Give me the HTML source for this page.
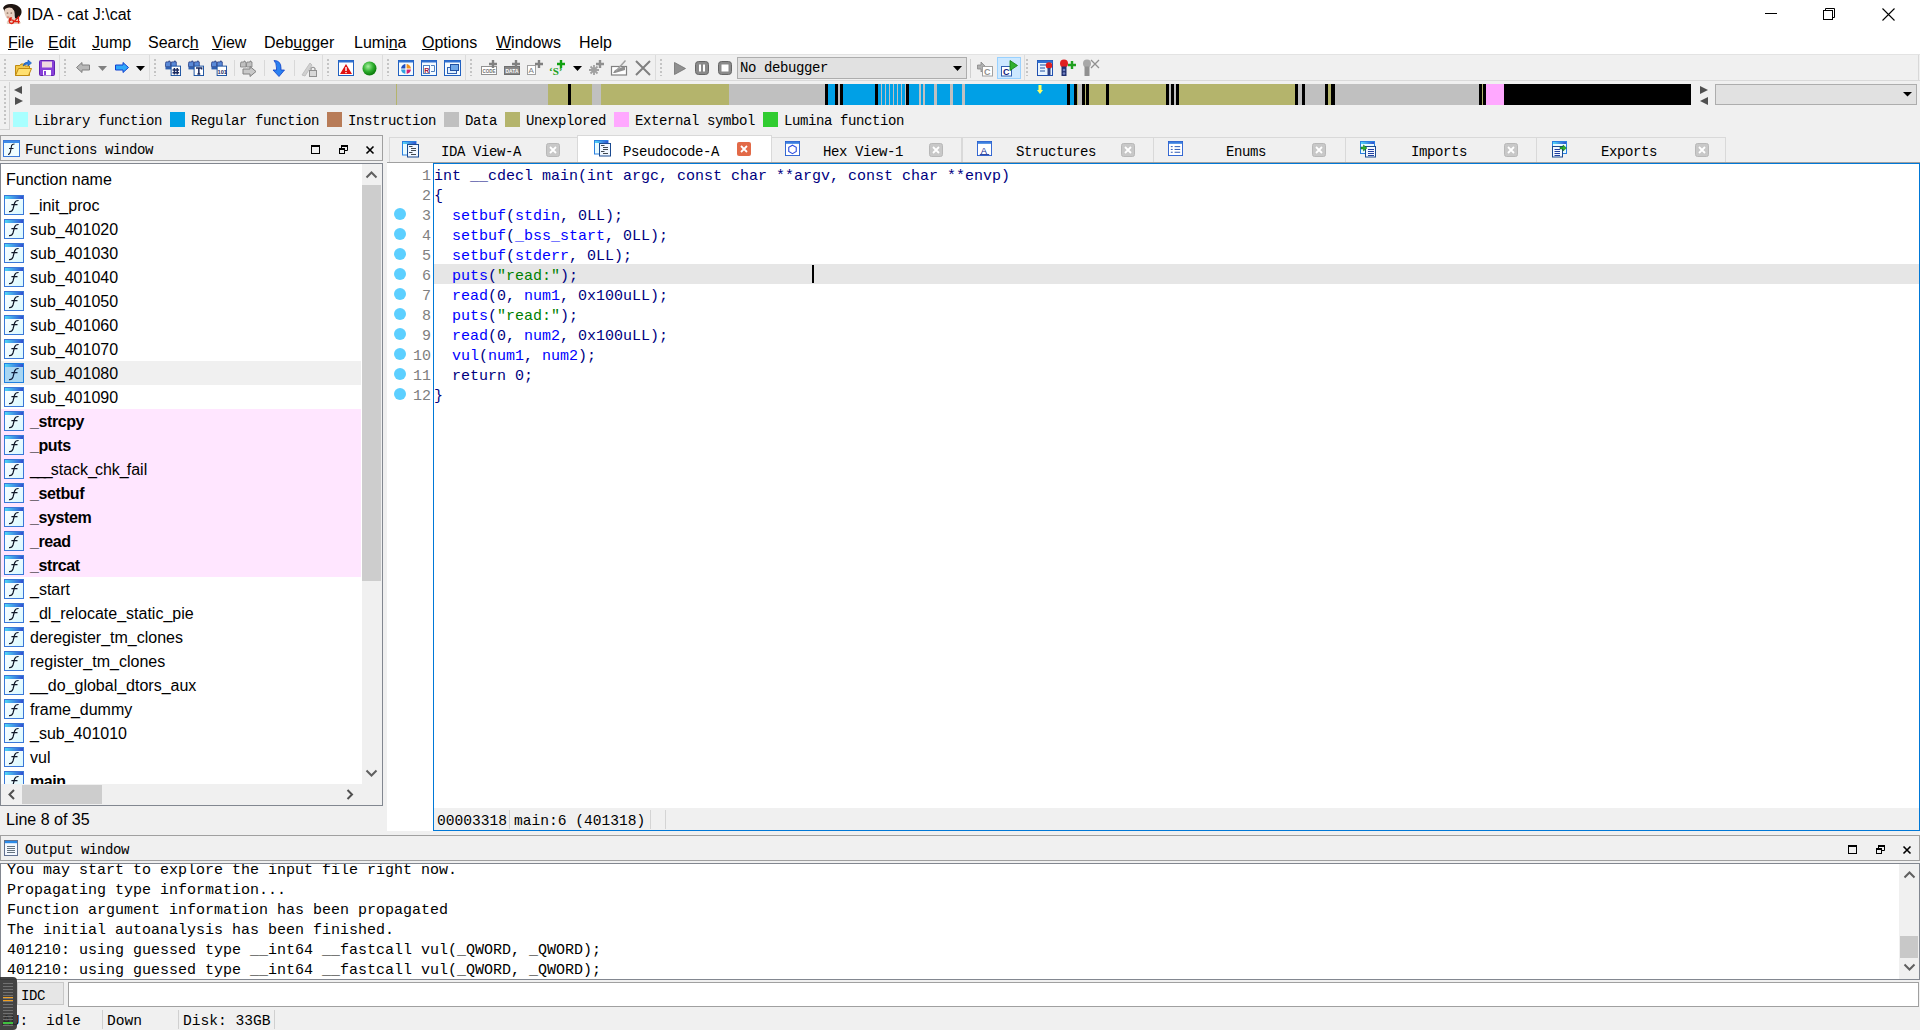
<!DOCTYPE html>
<html><head><meta charset="utf-8">
<style>
*{margin:0;padding:0;box-sizing:border-box}
html,body{width:1920px;height:1030px;overflow:hidden;background:#f0f0f0;font-family:"Liberation Sans",sans-serif;color:#000}
.a{position:absolute}
.ui{font-family:"Liberation Sans",sans-serif;font-size:16px;white-space:pre;line-height:20px}
.sm{position:absolute;font-family:"Liberation Mono",monospace;font-size:14px;letter-spacing:-0.4px;white-space:pre;line-height:16px}
.code{position:absolute;font-family:"Liberation Mono",monospace;font-size:15px;white-space:pre;line-height:20px}
.grip{position:absolute;width:2px;height:17px;background:repeating-linear-gradient(#c4c4c4 0 2px,transparent 2px 4px)}
.sep{position:absolute;width:1px;background:#d4d4d4}
svg{position:absolute;overflow:visible}
b.i{font-weight:normal;color:#0000ff}
</style></head><body>
<!-- ===== title bar ===== -->
<div class="a" style="left:0;top:0;width:1920px;height:54px;background:#fff"></div>
<svg style="left:2px;top:3px" width="20" height="22" viewBox="0 0 20 22">
<path d="M1 5Q3 0.5 10 1Q16 1.5 19 6Q20.5 10 18 13Q16 17 13 16L12 8Q8 5 3 9Z" fill="#1e1410"/>
<path d="M3 6Q6 3.5 10 5Q12.5 7 12.5 11Q12 16 8 17Q5 16.5 3.5 13Q1.5 9 3 6Z" fill="#e6cfbf"/>
<ellipse cx="5.5" cy="10" rx="0.9" ry="0.6" fill="#604030"/><ellipse cx="9.3" cy="10" rx="0.9" ry="0.6" fill="#604030"/>
<ellipse cx="6" cy="14" rx="1.3" ry="0.6" fill="#c06050"/>
<path d="M6 17Q10 16 12 14Q15 17 19 19.5L18 21H5Q4 19 6 17Z" fill="#e4d2c4"/>
<path d="M8.5 14.5Q7 16 7.2 18.5Q7.5 20.5 9.5 20.5Q11.5 20.5 11.5 18.5Q11.5 16.8 9.5 16.8Q8.2 16.8 8 18M9.8 14.5Q8.6 15.5 8 17" fill="none" stroke="#e02010" stroke-width="1.3"/>
<path d="M16.5 20.5V14L12.2 18.6H17.8" fill="none" stroke="#e02010" stroke-width="1.3"/>
</svg>
<div class="a ui" style="left:27px;top:5px">IDA - cat J:\cat</div>
<svg style="left:1765px;top:13px" width="13" height="1"><rect width="12" height="1" fill="#000"/></svg>
<svg style="left:1823px;top:8px" width="13" height="12"><rect x="0.5" y="2.5" width="9" height="9" fill="none" stroke="#000"/><path d="M2.5 2.5V0.5H11.5V9.5H9.5" fill="none" stroke="#000"/></svg>
<svg style="left:1882px;top:8px" width="13" height="13"><path d="M0.5 0.5L12.5 12.5M12.5 0.5L0.5 12.5" stroke="#000" stroke-width="1.1"/></svg>
<!-- ===== menu ===== -->
<div class="a ui" style="left:8px;top:33px"><u>F</u>ile</div>
<div class="a ui" style="left:48px;top:33px"><u>E</u>dit</div>
<div class="a ui" style="left:92px;top:33px"><u>J</u>ump</div>
<div class="a ui" style="left:148px;top:33px">Searc<u>h</u></div>
<div class="a ui" style="left:212px;top:33px"><u>V</u>iew</div>
<div class="a ui" style="left:264px;top:33px">Deb<u>u</u>gger</div>
<div class="a ui" style="left:354px;top:33px">Lumi<u>n</u>a</div>
<div class="a ui" style="left:422px;top:33px"><u>O</u>ptions</div>
<div class="a ui" style="left:496px;top:33px"><u>W</u>indows</div>
<div class="a ui" style="left:579px;top:33px">Help</div>
<!-- ===== toolbar ===== -->
<div class="a" style="left:0;top:54px;width:1920px;height:1px;background:#e3e3e3"></div>
<div class="a" style="left:0;top:80px;width:1920px;height:1px;background:#dadada"></div>

<div class="grip" style="left:4px;top:59px"></div>
<svg style="left:15px;top:60px" width="17" height="17" viewBox="0 0 17 17">
<path d="M0.5 5.5H5L6 4H10V6H14.5V15.5H0.5Z" fill="#f2c84a" stroke="#c08a10"/>
<path d="M0.5 15.5L3.5 8.5H16.5L13.5 15.5Z" fill="#ffe070" stroke="#c08a10"/>
<path d="M8 6Q9 2 13 2V0L16.5 3L13 6V4Q10 4 8 6Z" fill="#2a7ae0" stroke="#1050b0" stroke-width="0.6"/>
</svg>
<svg style="left:39px;top:60px" width="16" height="16" viewBox="0 0 16 16">
<rect x="0.5" y="0.5" width="15" height="15" rx="1" fill="#8840d8" stroke="#6020b0"/>
<rect x="3" y="1.5" width="10" height="6" fill="#f0d8e0"/>
<rect x="4" y="10" width="8" height="5.5" fill="#fff"/>
<rect x="5" y="11" width="2" height="4" fill="#8840d8"/>
</svg>
<div class="sep" style="left:59px;top:55px;height:25px;background:#dcdcdc"></div>
<div class="grip" style="left:64px;top:59px"></div>
<svg style="left:76px;top:62px" width="14" height="11" viewBox="0 0 14 11"><path d="M0.5 5.5L6 0.5V3H13.5V8H6V10.5Z" fill="#b8b8b8" stroke="#808080"/></svg>
<svg style="left:98px;top:66px" width="10" height="6"><path d="M0 0H9L4.5 5Z" fill="#808080"/></svg>
<svg style="left:115px;top:62px" width="14" height="11" viewBox="0 0 14 11"><path d="M13.5 5.5L8 0.5V3H0.5V8H8V10.5Z" fill="#30a8f8" stroke="#1040d0"/></svg>
<svg style="left:136px;top:66px" width="10" height="6"><path d="M0 0H9L4.5 5Z" fill="#000"/></svg>
<div class="sep" style="left:149px;top:55px;height:25px;background:#dcdcdc"></div>
<div class="grip" style="left:154px;top:59px"></div>
<svg style="left:165px;top:60px" width="16" height="16" viewBox="0 0 17 17">
<path d="M1 2H4V1H5V2H6V7H0.5V4Z M7 2H10V1H11V2H12V7H6.5V4Z" fill="#5a8ad8" stroke="#203880" stroke-width="0.8"/>
<rect x="0.5" y="7" width="11" height="3" fill="#3060b0"/>
<rect x="6.5" y="6.5" width="10" height="10" fill="#fff" stroke="#1850a0"/>
<path d="M10 8.5V15.5M13 8.5V15.5M8 10.5H15M8 13.5H15" stroke="#1a2a60" stroke-width="1.6"/>
</svg><svg style="left:188px;top:60px" width="16" height="16" viewBox="0 0 17 17">
<path d="M1 2H4V1H5V2H6V7H0.5V4Z M7 2H10V1H11V2H12V7H6.5V4Z" fill="#5a8ad8" stroke="#203880" stroke-width="0.8"/>
<rect x="0.5" y="7" width="11" height="3" fill="#3060b0"/>
<rect x="6.5" y="6.5" width="10" height="10" fill="#fff" stroke="#1850a0"/>
<path d="M8.5 8.5H14.5V10M11.5 8.5V15M10 15H13" stroke="#1a2a60" stroke-width="1.6" fill="none"/>
</svg><svg style="left:211px;top:60px" width="16" height="16" viewBox="0 0 17 17">
<path d="M1 2H4V1H5V2H6V7H0.5V4Z M7 2H10V1H11V2H12V7H6.5V4Z" fill="#5a8ad8" stroke="#203880" stroke-width="0.8"/>
<rect x="0.5" y="7" width="11" height="3" fill="#3060b0"/>
<rect x="6.5" y="6.5" width="10" height="10" fill="#fff" stroke="#1850a0"/>
<text x="7" y="15" font-family="Liberation Sans" font-size="6" font-weight="bold" fill="#1a2a60">101</text>
</svg>
<div class="sep" style="left:234px;top:60px;height:16px;background:#d8d8d8"></div>
<svg style="left:240px;top:60px" width="17" height="17" viewBox="0 0 17 17">
<path d="M1 2H4V1H5V2H6V7H0.5V4Z M7 2H10V1H11V2H12V7H6.5V4Z" fill="#c0c0c0" stroke="#808080" stroke-width="0.8"/>
<path d="M3 9H10V6.5L16 11.5L10 16.5V14H3Z" fill="#c8c8c8" stroke="#808080"/>
</svg>
<div class="sep" style="left:264px;top:60px;height:16px;background:#d8d8d8"></div>
<svg style="left:272px;top:60px" width="14" height="17" viewBox="0 0 14 17">
<path d="M2 0.5Q9 0.5 9 8V10H12.5L7 16.5L1 10H4.5V8Q4.5 3 2 0.5Z" fill="#2a80f0" stroke="#1040c8" stroke-width="0.8"/>
</svg>
<div class="sep" style="left:294px;top:60px;height:16px;background:#d8d8d8"></div>
<svg style="left:301px;top:60px" width="17" height="17" viewBox="0 0 17 17">
<path d="M1 15L9 3L11 5L4 16Z" fill="#d0d0d0" stroke="#c0c0c0"/>
<rect x="8.5" y="10.5" width="7" height="6" fill="#d8d8d8" stroke="#909090"/>
<path d="M10 10.5V8.5Q12 6 14 8.5V10.5" fill="none" stroke="#909090" stroke-width="1.2"/>
</svg>
<div class="sep" style="left:322px;top:55px;height:25px;background:#dcdcdc"></div>
<div class="grip" style="left:327px;top:59px"></div>
<svg style="left:338px;top:60px" width="16" height="16" viewBox="0 0 16 16">
<rect x="0.5" y="0.5" width="15" height="15" fill="#fff" stroke="#2060c0"/><rect x="0.5" y="0.5" width="15" height="2" fill="#3070d0"/>
<path d="M8 4L14 14H2Z" fill="#e01010"/><rect x="7.3" y="7" width="1.4" height="4" fill="#fff"/><rect x="7.3" y="12" width="1.4" height="1.2" fill="#fff"/>
</svg>
<svg style="left:362px;top:61px" width="15" height="15" viewBox="0 0 15 15">
<defs><radialGradient id="gb" cx="0.4" cy="0.35" r="0.6"><stop offset="0" stop-color="#a8f0a0"/><stop offset="0.6" stop-color="#30b030"/><stop offset="1" stop-color="#108010"/></radialGradient></defs>
<circle cx="7.5" cy="7.5" r="7" fill="url(#gb)"/>
</svg>
<div class="sep" style="left:382px;top:55px;height:25px;background:#dcdcdc"></div>
<div class="grip" style="left:387px;top:59px"></div>
<svg style="left:398px;top:60px" width="16" height="16" viewBox="0 0 16 16">
<rect x="0.5" y="0.5" width="15" height="15" fill="#f4fbff" stroke="#2060c0"/><rect x="0.5" y="0.5" width="15" height="2" fill="#3070d0"/>
<path d="M8 4A5 5 0 0 0 3 9H8Z" fill="#2050c0"/><path d="M8 4A5 5 0 0 1 13 9H8Z" fill="#f09020"/><path d="M3 9A5 5 0 0 0 8 14V9Z" fill="#30a0e0"/><path d="M13 9A5 5 0 0 1 8 14V9Z" fill="#d02070"/>
<path d="M8 4V14M3 9H13" stroke="#fff" stroke-width="1.2"/>
</svg>
<svg style="left:421px;top:60px" width="16" height="16" viewBox="0 0 16 16">
<rect x="0.5" y="0.5" width="15" height="15" fill="#f4fbff" stroke="#2060c0"/><rect x="0.5" y="0.5" width="15" height="2" fill="#3070d0"/>
<rect x="2.5" y="5.5" width="6" height="8" fill="#fff" stroke="#5080c0"/><text x="3.3" y="12.5" font-family="Liberation Sans" font-weight="bold" font-size="7" fill="#a02040">R</text>
<path d="M10 5.5H13.5V11.5H10" fill="none" stroke="#5080c0"/>
</svg>
<svg style="left:444px;top:60px" width="17" height="16" viewBox="0 0 17 16">
<rect x="0.5" y="0.5" width="16" height="15" fill="#f4fbff" stroke="#2060c0"/><rect x="0.5" y="0.5" width="16" height="2" fill="#3070d0"/>
<rect x="3.5" y="7.5" width="9" height="6" fill="#e0f0ff" stroke="#3060b0"/><rect x="6.5" y="4.5" width="8" height="6" fill="#70a8e8" stroke="#2050a0"/>
</svg>
<div class="sep" style="left:465px;top:55px;height:25px;background:#dcdcdc"></div>
<div class="grip" style="left:470px;top:59px"></div>
<svg style="left:481px;top:59px" width="17" height="17" viewBox="0 0 17 17"><rect x="0.5" y="7.5" width="15" height="8" fill="#fff" stroke="#909090"/><text x="1.5" y="14" font-family="Liberation Sans" font-weight="bold" font-size="6" textLength="13" lengthAdjust="spacingAndGlyphs" fill="#707070">CODE</text>
<path d="M12 1V9M8 5H16" stroke="#808080" stroke-width="2.4"/></svg><svg style="left:504px;top:59px" width="17" height="17" viewBox="0 0 17 17"><rect x="0.5" y="7.5" width="15" height="8" fill="#888" stroke="#707070"/><text x="1.5" y="14" font-family="Liberation Sans" font-weight="bold" font-size="6" textLength="13" lengthAdjust="spacingAndGlyphs" fill="#fff">DATA</text>
<path d="M12 1V9M8 5H16" stroke="#808080" stroke-width="2.4"/></svg><svg style="left:527px;top:59px" width="17" height="17" viewBox="0 0 17 17"><rect x="0.5" y="6.5" width="8" height="9" fill="#fff" stroke="#a0a0a0"/><text x="1.5" y="14" font-family="Liberation Sans" font-size="8" fill="#808080">A</text>
<path d="M12 1V9M8 5H16" stroke="#808080" stroke-width="2.4"/></svg><svg style="left:549px;top:59px" width="17" height="17" viewBox="0 0 17 17"><text x="0" y="15.5" font-family="Liberation Serif" font-weight="bold" font-size="11" fill="#20a020">‘S’</text>
<path d="M12 1V9M8 5H16" stroke="#10a010" stroke-width="2.4"/></svg>
<svg style="left:573px;top:66px" width="10" height="6"><path d="M0 0H9L4.5 5Z" fill="#000"/></svg>
<svg style="left:588px;top:59px" width="17" height="17" viewBox="0 0 17 17">
<path d="M6 6V16M1 11H11M2.5 7.5L9.5 14.5M9.5 7.5L2.5 14.5" stroke="#a0a0a0" stroke-width="1.8"/>
<path d="M12 1V9M8 5H16" stroke="#909090" stroke-width="2.4"/></svg>
<svg style="left:611px;top:59px" width="17" height="17" viewBox="0 0 17 17">
<rect x="0.5" y="7.5" width="15" height="8.5" fill="#fff" stroke="#808080" stroke-width="1.2"/>
<path d="M2 14L4 11L14 7V11L4 14Z" fill="#909090"/><path d="M5 12L14.5 1.5" stroke="#a0a0a0" stroke-width="1.5"/>
</svg>
<svg style="left:635px;top:60px" width="16" height="16" viewBox="0 0 16 16"><path d="M1 1L15 15M15 1L1 15" stroke="#808080" stroke-width="2"/></svg>
<div class="sep" style="left:655px;top:55px;height:25px;background:#dcdcdc"></div>
<div class="grip" style="left:660px;top:59px"></div>
<svg style="left:674px;top:62px" width="12" height="13" viewBox="0 0 12 13"><path d="M0.5 0.5V12.5L11.5 6.5Z" fill="#909090" stroke="#707070" stroke-width="0.8"/></svg>
<svg style="left:695px;top:61px" width="14" height="14" viewBox="0 0 14 14"><rect x="0.5" y="0.5" width="13" height="13" rx="3" fill="#8a8a8a" stroke="#666"/><rect x="4" y="3.5" width="2" height="7" fill="#fff"/><rect x="8" y="3.5" width="2" height="7" fill="#fff"/></svg>
<svg style="left:718px;top:61px" width="14" height="14" viewBox="0 0 14 14"><rect x="0.5" y="0.5" width="13" height="13" rx="3" fill="#8a8a8a" stroke="#666"/><rect x="3.5" y="3.5" width="7" height="7" fill="#fff"/></svg>
<div class="a" style="left:737px;top:57px;width:230px;height:22px;background:#e1e1e1;border:1px solid #adadad"></div>
<div class="sm" style="left:740px;top:60px">No debugger</div>
<svg style="left:953px;top:66px" width="10" height="6"><path d="M0 0H9L4.5 5Z" fill="#000"/></svg>
<div class="sep" style="left:970px;top:59px;height:19px;background:#d0d0d0"></div>
<svg style="left:977px;top:60px" width="17" height="17" viewBox="0 0 17 17">
<path d="M0.5 5V9H4V12L9 7L4 2V5Z" fill="#b0b0b0" stroke="#888" stroke-width="0.8"/>
<rect x="5.5" y="6.5" width="10" height="9.5" fill="#fff" stroke="#a0a0a0"/><text x="7" y="15" font-family="Liberation Sans" font-weight="bold" font-size="9" fill="#909090">C</text>
</svg>
<div class="a" style="left:997px;top:57px;width:24px;height:22px;background:#cce8ff;border:1px solid #99d1ff"></div>
<svg style="left:1001px;top:60px" width="17" height="17" viewBox="0 0 17 17">
<rect x="0.5" y="6.5" width="10" height="9.5" fill="#fff" stroke="#3060b0"/><text x="2" y="15" font-family="Liberation Sans" font-weight="bold" font-size="9" fill="#102080">C</text>
<path d="M9 0.5V10.5L16.5 5.5Z" fill="#30b030" stroke="#108010" stroke-width="0.8"/>
</svg>
<div class="sep" style="left:1024px;top:55px;height:25px;background:#dcdcdc"></div>
<div class="grip" style="left:1026px;top:59px"></div>
<svg style="left:1037px;top:60px" width="17" height="17" viewBox="0 0 17 17">
<rect x="0.5" y="0.5" width="15" height="15" fill="#e8f4ff" stroke="#2050b0"/><rect x="0.5" y="0.5" width="15" height="2.5" fill="#3070d0"/>
<path d="M3 5H9M3 8H8M3 11H8" stroke="#2050a0"/><circle cx="12" cy="5.5" r="3.2" fill="#e02020"/><rect x="10.5" y="8" width="3" height="7" fill="#304080"/>
</svg>
<svg style="left:1059px;top:59px" width="18" height="18" viewBox="0 0 18 18">
<circle cx="5" cy="4.5" r="4" fill="#e02020"/><rect x="2.5" y="7.5" width="5" height="9.5" fill="#203070"/><circle cx="5" cy="11" r="1.3" fill="#7080c0"/><circle cx="5" cy="14.5" r="1.3" fill="#7080c0"/>
<path d="M13 2V10M9 6H17" stroke="#20a020" stroke-width="2.4"/>
</svg>
<svg style="left:1082px;top:59px" width="18" height="18" viewBox="0 0 18 18">
<circle cx="5" cy="4.5" r="4" fill="#a8a8a8"/><rect x="2.5" y="7.5" width="5" height="9.5" fill="#909090"/>
<path d="M9 1L17 9M17 1L9 9" stroke="#909090" stroke-width="1.3"/>
</svg>


<div class="a" style="left:1918px;top:55px;width:1px;height:25px;background:#d8d8d8"></div>
<!-- ===== nav band ===== -->
<div class="a" style="left:9px;top:82px;width:1px;height:48px;background:#d4d4d4"></div>
<div class="a" style="left:0;top:129px;width:10px;height:1px;background:#d4d4d4"></div>
<div class="grip" style="left:4px;top:86px;height:40px"></div>
<svg style="left:14px;top:86px" width="9" height="20"><path d="M8 0V8L0 4Z" fill="#505050"/><path d="M1 11V19L9 15Z" fill="#505050"/></svg>
<div class="a" style="left:30px;top:84px;width:1661px;height:21px;background:#c0c0c0"></div>
<div class="a" style="left:396px;top:84px;width:1px;height:21px;background:#b4b46c"></div>
<div class="a" style="left:548px;top:84px;width:20px;height:21px;background:#b4b46c"></div>
<div class="a" style="left:568px;top:84px;width:3px;height:21px;background:#000000"></div>
<div class="a" style="left:571px;top:84px;width:21px;height:21px;background:#b4b46c"></div>
<div class="a" style="left:601px;top:84px;width:128px;height:21px;background:#b4b46c"></div>
<div class="a" style="left:825px;top:84px;width:3px;height:21px;background:#000000"></div>
<div class="a" style="left:828px;top:84px;width:7px;height:21px;background:#00a0e6"></div>
<div class="a" style="left:835px;top:84px;width:3px;height:21px;background:#000000"></div>
<div class="a" style="left:840px;top:84px;width:3px;height:21px;background:#000000"></div>
<div class="a" style="left:843px;top:84px;width:32px;height:21px;background:#00a0e6"></div>
<div class="a" style="left:875px;top:84px;width:3px;height:21px;background:#000000"></div>
<div class="a" style="left:878px;top:84px;width:28px;height:21px;background:#00a0e6"></div>
<div class="a" style="left:906px;top:84px;width:3px;height:21px;background:#000000"></div>
<div class="a" style="left:909px;top:84px;width:10px;height:21px;background:#00a0e6"></div>
<div class="a" style="left:921px;top:84px;width:2px;height:21px;background:#00a0e6"></div>
<div class="a" style="left:925px;top:84px;width:9px;height:21px;background:#00a0e6"></div>
<div class="a" style="left:937px;top:84px;width:13px;height:21px;background:#00a0e6"></div>
<div class="a" style="left:953px;top:84px;width:9px;height:21px;background:#00a0e6"></div>
<div class="a" style="left:965px;top:84px;width:102px;height:21px;background:#00a0e6"></div>
<div class="a" style="left:1067px;top:84px;width:3px;height:21px;background:#000000"></div>
<div class="a" style="left:1070px;top:84px;width:4px;height:21px;background:#00a0e6"></div>
<div class="a" style="left:1074px;top:84px;width:3px;height:21px;background:#000000"></div>
<div class="a" style="left:1077px;top:84px;width:1px;height:21px;background:#b4b46c"></div>
<div class="a" style="left:1082px;top:84px;width:3px;height:21px;background:#000000"></div>
<div class="a" style="left:1085px;top:84px;width:1px;height:21px;background:#b4b46c"></div>
<div class="a" style="left:1086px;top:84px;width:3px;height:21px;background:#000000"></div>
<div class="a" style="left:1089px;top:84px;width:17px;height:21px;background:#b4b46c"></div>
<div class="a" style="left:1106px;top:84px;width:3px;height:21px;background:#000000"></div>
<div class="a" style="left:1109px;top:84px;width:57px;height:21px;background:#b4b46c"></div>
<div class="a" style="left:1166px;top:84px;width:3px;height:21px;background:#000000"></div>
<div class="a" style="left:1171px;top:84px;width:3px;height:21px;background:#000000"></div>
<div class="a" style="left:1176px;top:84px;width:3px;height:21px;background:#000000"></div>
<div class="a" style="left:1179px;top:84px;width:116px;height:21px;background:#b4b46c"></div>
<div class="a" style="left:1295px;top:84px;width:3px;height:21px;background:#000000"></div>
<div class="a" style="left:1302px;top:84px;width:3px;height:21px;background:#000000"></div>
<div class="a" style="left:1325px;top:84px;width:3px;height:21px;background:#000000"></div>
<div class="a" style="left:1328px;top:84px;width:3px;height:21px;background:#b4b46c"></div>
<div class="a" style="left:1331px;top:84px;width:4px;height:21px;background:#000000"></div>
<div class="a" style="left:1479px;top:84px;width:3px;height:21px;background:#000000"></div>
<div class="a" style="left:1482px;top:84px;width:1px;height:21px;background:#b4b46c"></div>
<div class="a" style="left:1483px;top:84px;width:3px;height:21px;background:#000000"></div>
<div class="a" style="left:1486px;top:84px;width:18px;height:21px;background:#ffa8ff"></div>
<div class="a" style="left:1504px;top:84px;width:187px;height:21px;background:#000000"></div>
<div class="a" style="left:881px;top:84px;width:1px;height:21px;background:#c0c0c0"></div>
<div class="a" style="left:885px;top:84px;width:1px;height:21px;background:#c0c0c0"></div>
<div class="a" style="left:889px;top:84px;width:1px;height:21px;background:#c0c0c0"></div>
<div class="a" style="left:893px;top:84px;width:1px;height:21px;background:#c0c0c0"></div>
<div class="a" style="left:897px;top:84px;width:1px;height:21px;background:#c0c0c0"></div>
<div class="a" style="left:901px;top:84px;width:1px;height:21px;background:#c0c0c0"></div>
<div class="a" style="left:905px;top:84px;width:1px;height:21px;background:#c0c0c0"></div>
<svg style="left:1037px;top:85px" width="6" height="9"><path d="M1.5 0H4.5V5H6L3 9L0 5H1.5Z" fill="#ffff60"/></svg>

<svg style="left:1700px;top:86px" width="9" height="20"><path d="M0 0V8L8 4Z" fill="#505050"/><path d="M8 11V19L0 15Z" fill="#505050"/></svg>
<div class="a" style="left:1715px;top:84px;width:202px;height:21px;background:#e1e1e1;border:1px solid #adadad"></div>
<svg style="left:1903px;top:92px" width="9" height="5"><path d="M0 0H9L4.5 4.5Z" fill="#000"/></svg>
<div class="a" style="left:13px;top:112px;width:15px;height:15px;background:#a8ffff"></div><div class="sm" style="left:34px;top:113px">Library function</div>
<div class="a" style="left:170px;top:112px;width:15px;height:15px;background:#00a0e6"></div><div class="sm" style="left:191px;top:113px">Regular function</div>
<div class="a" style="left:327px;top:112px;width:15px;height:15px;background:#b87c58"></div><div class="sm" style="left:348px;top:113px">Instruction</div>
<div class="a" style="left:444px;top:112px;width:15px;height:15px;background:#c0c0c0"></div><div class="sm" style="left:465px;top:113px">Data</div>
<div class="a" style="left:505px;top:112px;width:15px;height:15px;background:#b4b46c"></div><div class="sm" style="left:526px;top:113px">Unexplored</div>
<div class="a" style="left:614px;top:112px;width:15px;height:15px;background:#ffa8ff"></div><div class="sm" style="left:635px;top:113px">External symbol</div>
<div class="a" style="left:763px;top:112px;width:15px;height:15px;background:#30cc30"></div><div class="sm" style="left:784px;top:113px">Lumina function</div>


<!-- ===== functions window ===== -->
<div class="a" style="left:0;top:135px;width:383px;height:26px;border:1px solid #a0a0a0;background:#f0f0f0"></div>
<div class="a" style="left:0;top:163px;width:383px;height:643px;border:1px solid #828790;background:#fff;overflow:hidden"></div>
<svg width="0" height="0" style="position:absolute"><defs>
<linearGradient id="fbar" x1="0" x2="1"><stop offset="0" stop-color="#50d8f8"/><stop offset="1" stop-color="#3050d0"/></linearGradient>
<linearGradient id="fbg" x1="0" y1="0" x2="1" y2="1"><stop offset="0" stop-color="#ffffff"/><stop offset="1" stop-color="#d8f8ff"/></linearGradient>
<g id="ficon"><rect x="0.5" y="0.5" width="19" height="19" fill="url(#fbg)" stroke="#3a78d8"/><rect x="1" y="1" width="18" height="3" fill="url(#fbar)"/>
<path d="M5 16.6Q8 17 9 14L10.6 8Q11.4 5.4 14.6 5.5M7.4 9.6H13.5" fill="none" stroke="#101828" stroke-width="1.2"/></g>
<g id="ficon2"><rect x="0.5" y="0.5" width="19" height="19" fill="#a8d6f2" stroke="#2080e0"/><rect x="1" y="1" width="18" height="3" fill="url(#fbar)"/><path d="M5 16.6Q8 17 9 14L10.6 8Q11.4 5.4 14.6 5.5M7.4 9.6H13.5" fill="none" stroke="#102040" stroke-width="1.2"/></g>
</defs></svg>
<svg style="left:3px;top:140px" width="17" height="17" viewBox="0 0 17 17">
<rect x="0.5" y="0.5" width="16" height="16" fill="#eefcff" stroke="#3a78d8"/><rect x="1" y="1" width="15" height="2" fill="#3c8ce8"/>
<path d="M5 14.5Q7 14.5 7.6 11L8.6 5.5Q9 4 11.5 4M6 8.5H10.5" fill="none" stroke="#101828" stroke-width="1.1"/>
</svg>
<div class="sm" style="left:25px;top:142px">Functions window</div>
<svg style="left:311px;top:145px" width="9" height="9"><rect x="0.5" y="0.5" width="8" height="8" fill="none" stroke="#000"/><rect x="0" y="0" width="9" height="2" fill="#000"/></svg>
<svg style="left:339px;top:145px" width="9" height="9"><rect x="0.5" y="3.5" width="5" height="5" fill="none" stroke="#000"/><rect x="0" y="3" width="6" height="2" fill="#000"/><path d="M2.5 3V0.5H8.5V5.5H6" fill="none" stroke="#000"/><rect x="2" y="0" width="7" height="2" fill="#000"/></svg>
<svg style="left:366px;top:146px" width="8" height="8"><path d="M0.5 0.5L7.5 7.5M7.5 0.5L0.5 7.5" stroke="#000" stroke-width="1.6"/></svg>
<div class="a ui" style="left:6px;top:170px">Function name</div>
<div class="a" style="left:1px;top:164px;width:361px;height:620px;overflow:hidden">
<div class="a" style="left:0;top:29px;width:360px;height:24px;"></div><svg style="left:3px;top:31px" width="20" height="20" viewBox="0 0 20 20"><use href="#ficon"/></svg><div class="a ui" style="left:29px;top:32px;">_init_proc</div>
<div class="a" style="left:0;top:53px;width:360px;height:24px;"></div><svg style="left:3px;top:55px" width="20" height="20" viewBox="0 0 20 20"><use href="#ficon"/></svg><div class="a ui" style="left:29px;top:56px;">sub_401020</div>
<div class="a" style="left:0;top:77px;width:360px;height:24px;"></div><svg style="left:3px;top:79px" width="20" height="20" viewBox="0 0 20 20"><use href="#ficon"/></svg><div class="a ui" style="left:29px;top:80px;">sub_401030</div>
<div class="a" style="left:0;top:101px;width:360px;height:24px;"></div><svg style="left:3px;top:103px" width="20" height="20" viewBox="0 0 20 20"><use href="#ficon"/></svg><div class="a ui" style="left:29px;top:104px;">sub_401040</div>
<div class="a" style="left:0;top:125px;width:360px;height:24px;"></div><svg style="left:3px;top:127px" width="20" height="20" viewBox="0 0 20 20"><use href="#ficon"/></svg><div class="a ui" style="left:29px;top:128px;">sub_401050</div>
<div class="a" style="left:0;top:149px;width:360px;height:24px;"></div><svg style="left:3px;top:151px" width="20" height="20" viewBox="0 0 20 20"><use href="#ficon"/></svg><div class="a ui" style="left:29px;top:152px;">sub_401060</div>
<div class="a" style="left:0;top:173px;width:360px;height:24px;"></div><svg style="left:3px;top:175px" width="20" height="20" viewBox="0 0 20 20"><use href="#ficon"/></svg><div class="a ui" style="left:29px;top:176px;">sub_401070</div>
<div class="a" style="left:0;top:197px;width:360px;height:24px;background:#f0f0f0;"></div><svg style="left:3px;top:199px" width="20" height="20" viewBox="0 0 20 20"><use href="#ficon2"/></svg><div class="a ui" style="left:29px;top:200px;">sub_401080</div>
<div class="a" style="left:0;top:221px;width:360px;height:24px;"></div><svg style="left:3px;top:223px" width="20" height="20" viewBox="0 0 20 20"><use href="#ficon"/></svg><div class="a ui" style="left:29px;top:224px;">sub_401090</div>
<div class="a" style="left:0;top:245px;width:360px;height:24px;background:#ffe6ff;"></div><svg style="left:3px;top:247px" width="20" height="20" viewBox="0 0 20 20"><use href="#ficon"/></svg><div class="a ui" style="left:29px;top:248px;font-weight:bold;letter-spacing:-0.4px;">_strcpy</div>
<div class="a" style="left:0;top:269px;width:360px;height:24px;background:#ffe6ff;"></div><svg style="left:3px;top:271px" width="20" height="20" viewBox="0 0 20 20"><use href="#ficon"/></svg><div class="a ui" style="left:29px;top:272px;font-weight:bold;letter-spacing:-0.4px;">_puts</div>
<div class="a" style="left:0;top:293px;width:360px;height:24px;background:#ffe6ff;"></div><svg style="left:3px;top:295px" width="20" height="20" viewBox="0 0 20 20"><use href="#ficon"/></svg><div class="a ui" style="left:29px;top:296px;"><span style="letter-spacing:-2px">___</span>stack<span style="letter-spacing:-2px">_</span>chk<span style="letter-spacing:-2px">_</span>fail</div>
<div class="a" style="left:0;top:317px;width:360px;height:24px;background:#ffe6ff;"></div><svg style="left:3px;top:319px" width="20" height="20" viewBox="0 0 20 20"><use href="#ficon"/></svg><div class="a ui" style="left:29px;top:320px;font-weight:bold;letter-spacing:-0.4px;">_setbuf</div>
<div class="a" style="left:0;top:341px;width:360px;height:24px;background:#ffe6ff;"></div><svg style="left:3px;top:343px" width="20" height="20" viewBox="0 0 20 20"><use href="#ficon"/></svg><div class="a ui" style="left:29px;top:344px;font-weight:bold;letter-spacing:-0.4px;">_system</div>
<div class="a" style="left:0;top:365px;width:360px;height:24px;background:#ffe6ff;"></div><svg style="left:3px;top:367px" width="20" height="20" viewBox="0 0 20 20"><use href="#ficon"/></svg><div class="a ui" style="left:29px;top:368px;font-weight:bold;letter-spacing:-0.4px;">_read</div>
<div class="a" style="left:0;top:389px;width:360px;height:24px;background:#ffe6ff;"></div><svg style="left:3px;top:391px" width="20" height="20" viewBox="0 0 20 20"><use href="#ficon"/></svg><div class="a ui" style="left:29px;top:392px;font-weight:bold;letter-spacing:-0.4px;">_strcat</div>
<div class="a" style="left:0;top:413px;width:360px;height:24px;"></div><svg style="left:3px;top:415px" width="20" height="20" viewBox="0 0 20 20"><use href="#ficon"/></svg><div class="a ui" style="left:29px;top:416px;">_start</div>
<div class="a" style="left:0;top:437px;width:360px;height:24px;"></div><svg style="left:3px;top:439px" width="20" height="20" viewBox="0 0 20 20"><use href="#ficon"/></svg><div class="a ui" style="left:29px;top:440px;">_dl_relocate_static_pie</div>
<div class="a" style="left:0;top:461px;width:360px;height:24px;"></div><svg style="left:3px;top:463px" width="20" height="20" viewBox="0 0 20 20"><use href="#ficon"/></svg><div class="a ui" style="left:29px;top:464px;">deregister_tm_clones</div>
<div class="a" style="left:0;top:485px;width:360px;height:24px;"></div><svg style="left:3px;top:487px" width="20" height="20" viewBox="0 0 20 20"><use href="#ficon"/></svg><div class="a ui" style="left:29px;top:488px;">register_tm_clones</div>
<div class="a" style="left:0;top:509px;width:360px;height:24px;"></div><svg style="left:3px;top:511px" width="20" height="20" viewBox="0 0 20 20"><use href="#ficon"/></svg><div class="a ui" style="left:29px;top:512px;">__do_global_dtors_aux</div>
<div class="a" style="left:0;top:533px;width:360px;height:24px;"></div><svg style="left:3px;top:535px" width="20" height="20" viewBox="0 0 20 20"><use href="#ficon"/></svg><div class="a ui" style="left:29px;top:536px;">frame_dummy</div>
<div class="a" style="left:0;top:557px;width:360px;height:24px;"></div><svg style="left:3px;top:559px" width="20" height="20" viewBox="0 0 20 20"><use href="#ficon"/></svg><div class="a ui" style="left:29px;top:560px;">_sub_401010</div>
<div class="a" style="left:0;top:581px;width:360px;height:24px;"></div><svg style="left:3px;top:583px" width="20" height="20" viewBox="0 0 20 20"><use href="#ficon"/></svg><div class="a ui" style="left:29px;top:584px;">vul</div>
<div class="a" style="left:0;top:605px;width:360px;height:24px;"></div><svg style="left:3px;top:607px" width="20" height="20" viewBox="0 0 20 20"><use href="#ficon"/></svg><div class="a ui" style="left:29px;top:608px;font-weight:bold;letter-spacing:-0.4px;">main</div>
</div>
<div class="a" style="left:362px;top:164px;width:20px;height:620px;background:#f0f0f0"></div>
<div class="a" style="left:362px;top:185px;width:19px;height:396px;background:#cdcdcd"></div>
<svg style="left:365px;top:170px" width="13" height="9"><path d="M1.5 7.5L6.5 2.5L11.5 7.5" fill="none" stroke="#606060" stroke-width="2"/></svg>
<svg style="left:365px;top:769px" width="13" height="9"><path d="M1.5 1.5L6.5 6.5L11.5 1.5" fill="none" stroke="#606060" stroke-width="2"/></svg>
<div class="a" style="left:1px;top:784px;width:381px;height:21px;background:#f0f0f0"></div>
<div class="a" style="left:22px;top:785px;width:80px;height:19px;background:#cdcdcd"></div>
<svg style="left:7px;top:789px" width="9" height="11"><path d="M7 1L2.5 5.5L7 10" fill="none" stroke="#505050" stroke-width="2"/></svg>
<svg style="left:346px;top:789px" width="9" height="11"><path d="M1.5 1L6 5.5L1.5 10" fill="none" stroke="#505050" stroke-width="2"/></svg>
<div class="a ui" style="left:6px;top:810px">Line 8 of 35</div>


<!-- ===== code view ===== -->
<div class="a" style="left:389px;top:137px;width:189px;height:26px;background:#f0f0f0;border:1px solid #d9d9d9;border-bottom:none"></div>
<svg style="left:402px;top:141px" width="17" height="17" viewBox="0 0 17 17"><rect x="0.5" y="0.5" width="13.5" height="13.5" fill="#e8fbff" stroke="#2a80e0"/><rect x="1" y="1" width="13" height="2" fill="url(#fbar)"/><rect x="5.5" y="3.5" width="11" height="12.5" fill="#f0f6ff" stroke="#1a4a90"/><path d="M7 5.5H10.5M9 7.5H14M9 9.5H14M7 11.5H10.5M9 13.5H14" stroke="#404850" stroke-width="1"/></svg>
<div class="sm" style="left:441px;top:144px">IDA View-A</div>
<svg style="left:546px;top:143px" width="14" height="14"><rect x="0.5" y="0.5" width="13" height="13" rx="2" fill="#c8c8c8" stroke="#b8b8b8"/><path d="M4 4L10 10M10 4L4 10" stroke="#fff" stroke-width="1.8"/></svg>
<div class="a" style="left:577px;top:135px;width:195px;height:28px;background:#fff;border:1px solid #d9d9d9;border-bottom:none"></div>
<svg style="left:594px;top:140px" width="17" height="17" viewBox="0 0 17 17"><rect x="0.5" y="0.5" width="13.5" height="13.5" fill="#e8fbff" stroke="#2a80e0"/><rect x="1" y="1" width="13" height="2" fill="url(#fbar)"/><rect x="5.5" y="3.5" width="11" height="12.5" fill="#f0f6ff" stroke="#1a4a90"/><path d="M7 5.5H10.5M9 7.5H14M9 9.5H14M7 11.5H10.5M9 13.5H14" stroke="#404850" stroke-width="1"/></svg>
<div class="sm" style="left:623px;top:144px">Pseudocode-A</div>
<svg style="left:737px;top:142px" width="14" height="14"><rect x="0" y="0" width="14" height="14" rx="2" fill="#e26a48"/><path d="M4 4L10 10M10 4L4 10" stroke="#fff" stroke-width="1.8"/></svg>
<div class="a" style="left:771px;top:137px;width:191px;height:26px;background:#f0f0f0;border:1px solid #d9d9d9;border-bottom:none"></div>
<svg style="left:785px;top:141px" width="15" height="15" viewBox="0 0 16 16"><rect x="0.5" y="0.5" width="15" height="15" fill="#fff" stroke="#2a60d0"/><rect x="1" y="1" width="14" height="2" fill="#3a80e0"/><path d="M8 4.5L12 6.8V11.2L8 13.5L4 11.2V6.8Z" fill="none" stroke="#3050e0" stroke-width="1.2"/></svg>
<div class="sm" style="left:823px;top:144px">Hex View-1</div>
<svg style="left:929px;top:143px" width="14" height="14"><rect x="0.5" y="0.5" width="13" height="13" rx="2" fill="#c8c8c8" stroke="#b8b8b8"/><path d="M4 4L10 10M10 4L4 10" stroke="#fff" stroke-width="1.8"/></svg>
<div class="a" style="left:962px;top:137px;width:192px;height:26px;background:#f0f0f0;border:1px solid #d9d9d9;border-bottom:none"></div>
<svg style="left:977px;top:141px" width="15" height="15" viewBox="0 0 16 16"><rect x="0.5" y="0.5" width="15" height="15" fill="#fff" stroke="#2a60d0"/><rect x="1" y="1" width="14" height="2" fill="#3a80e0"/><text x="4" y="13.5" font-family="Liberation Sans" font-size="10" fill="#102a90">A</text><path d="M3 14.5H13" stroke="#102a90"/></svg>
<div class="sm" style="left:1016px;top:144px">Structures</div>
<svg style="left:1121px;top:143px" width="14" height="14"><rect x="0.5" y="0.5" width="13" height="13" rx="2" fill="#c8c8c8" stroke="#b8b8b8"/><path d="M4 4L10 10M10 4L4 10" stroke="#fff" stroke-width="1.8"/></svg>
<div class="a" style="left:1153px;top:137px;width:193px;height:26px;background:#f0f0f0;border:1px solid #d9d9d9;border-bottom:none"></div>
<svg style="left:1168px;top:141px" width="15" height="15" viewBox="0 0 16 16"><rect x="0.5" y="0.5" width="15" height="15" fill="#fff" stroke="#2a60d0"/><rect x="1" y="1" width="14" height="2" fill="#3a80e0"/><path d="M3 6H5M3 9H5M3 12H5M7 6H13M7 9H13M7 12H13" stroke="#2050b0"/></svg>
<div class="sm" style="left:1226px;top:144px">Enums</div>
<svg style="left:1312px;top:143px" width="14" height="14"><rect x="0.5" y="0.5" width="13" height="13" rx="2" fill="#c8c8c8" stroke="#b8b8b8"/><path d="M4 4L10 10M10 4L4 10" stroke="#fff" stroke-width="1.8"/></svg>
<div class="a" style="left:1345px;top:137px;width:192px;height:26px;background:#f0f0f0;border:1px solid #d9d9d9;border-bottom:none"></div>
<svg style="left:1360px;top:141px" width="17" height="17" viewBox="0 0 17 17"><rect x="0.5" y="0.5" width="14" height="12" fill="#e8fbff" stroke="#2a80e0"/><rect x="1" y="1" width="13" height="2" fill="url(#fbar)"/><rect x="5.5" y="5.5" width="10" height="10.5" fill="#f4f8ff" stroke="#1a4a90"/><path d="M8 8.5H14M8 10.5H14M8 12.5H14M8 14.5H14" stroke="#2040a0"/><path d="M1 6H3.5V4L7 7L3.5 10V8H1Z" fill="#30b030" stroke="#106010" stroke-width="0.5"/></svg>
<div class="sm" style="left:1411px;top:144px">Imports</div>
<svg style="left:1504px;top:143px" width="14" height="14"><rect x="0.5" y="0.5" width="13" height="13" rx="2" fill="#c8c8c8" stroke="#b8b8b8"/><path d="M4 4L10 10M10 4L4 10" stroke="#fff" stroke-width="1.8"/></svg>
<div class="a" style="left:1536px;top:137px;width:190px;height:26px;background:#f0f0f0;border:1px solid #d9d9d9;border-bottom:none"></div>
<svg style="left:1552px;top:141px" width="17" height="17" viewBox="0 0 17 17"><rect x="0.5" y="0.5" width="14" height="12" fill="#e8fbff" stroke="#2a80e0"/><rect x="1" y="1" width="13" height="2" fill="url(#fbar)"/><rect x="0.5" y="5.5" width="10" height="10.5" fill="#f4f8ff" stroke="#1a4a90"/><path d="M2.5 8.5H8M2.5 10.5H8M2.5 12.5H8M2.5 14.5H8" stroke="#2040a0"/><path d="M8 6H11V4L14.5 7L11 10V8H8Z" fill="#30b030" stroke="#106010" stroke-width="0.5"/></svg>
<div class="sm" style="left:1601px;top:144px">Exports</div>
<svg style="left:1695px;top:143px" width="14" height="14"><rect x="0.5" y="0.5" width="13" height="13" rx="2" fill="#c8c8c8" stroke="#b8b8b8"/><path d="M4 4L10 10M10 4L4 10" stroke="#fff" stroke-width="1.8"/></svg>

<div class="a" style="left:387px;top:162px;width:1533px;height:1px;background:#a0a0a0"></div>
<div class="a" style="left:387px;top:163px;width:46px;height:668px;background:#fff"></div>
<div class="a" style="left:433px;top:163px;width:1487px;height:668px;border:1px solid #0078d7;background:#fff"></div>
<div class="a" style="left:434px;top:264px;width:1485px;height:20px;background:#e6e6e6"></div>
<div class="a" style="left:812px;top:265px;width:2px;height:18px;background:#000"></div>
<div class="code" style="left:434px;top:167px;color:#000080"><span style="color:#000080">int __cdecl main(int argc, const char **argv, const char **envp)</span></div>
<div class="code" style="left:404px;top:167px;width:27px;text-align:right;color:#808080">1</div>
<div class="code" style="left:434px;top:187px;color:#000080"><span style="color:#000080">{</span></div>
<div class="code" style="left:404px;top:187px;width:27px;text-align:right;color:#808080">2</div>
<div class="code" style="left:434px;top:207px;color:#000080">  <b class="i">setbuf</b>(<b class="i">stdin</b>, 0LL);</div>
<div class="code" style="left:404px;top:207px;width:27px;text-align:right;color:#808080">3</div>
<div class="a" style="left:394px;top:208px;width:12px;height:12px;border-radius:50%;background:#5ccfff"></div>
<div class="code" style="left:434px;top:227px;color:#000080">  <b class="i">setbuf</b>(<b class="i">_bss_start</b>, 0LL);</div>
<div class="code" style="left:404px;top:227px;width:27px;text-align:right;color:#808080">4</div>
<div class="a" style="left:394px;top:228px;width:12px;height:12px;border-radius:50%;background:#5ccfff"></div>
<div class="code" style="left:434px;top:247px;color:#000080">  <b class="i">setbuf</b>(<b class="i">stderr</b>, 0LL);</div>
<div class="code" style="left:404px;top:247px;width:27px;text-align:right;color:#808080">5</div>
<div class="a" style="left:394px;top:248px;width:12px;height:12px;border-radius:50%;background:#5ccfff"></div>
<div class="code" style="left:434px;top:267px;color:#000080">  <b class="i">puts</b>(<span style="color:#008000">"read:"</span>);</div>
<div class="code" style="left:404px;top:267px;width:27px;text-align:right;color:#808080">6</div>
<div class="a" style="left:394px;top:268px;width:12px;height:12px;border-radius:50%;background:#5ccfff"></div>
<div class="code" style="left:434px;top:287px;color:#000080">  <b class="i">read</b>(0, <b class="i">num1</b>, 0x100uLL);</div>
<div class="code" style="left:404px;top:287px;width:27px;text-align:right;color:#808080">7</div>
<div class="a" style="left:394px;top:288px;width:12px;height:12px;border-radius:50%;background:#5ccfff"></div>
<div class="code" style="left:434px;top:307px;color:#000080">  <b class="i">puts</b>(<span style="color:#008000">"read:"</span>);</div>
<div class="code" style="left:404px;top:307px;width:27px;text-align:right;color:#808080">8</div>
<div class="a" style="left:394px;top:308px;width:12px;height:12px;border-radius:50%;background:#5ccfff"></div>
<div class="code" style="left:434px;top:327px;color:#000080">  <b class="i">read</b>(0, <b class="i">num2</b>, 0x100uLL);</div>
<div class="code" style="left:404px;top:327px;width:27px;text-align:right;color:#808080">9</div>
<div class="a" style="left:394px;top:328px;width:12px;height:12px;border-radius:50%;background:#5ccfff"></div>
<div class="code" style="left:434px;top:347px;color:#000080">  <b class="i">vul</b>(<b class="i">num1</b>, <b class="i">num2</b>);</div>
<div class="code" style="left:404px;top:347px;width:27px;text-align:right;color:#808080">10</div>
<div class="a" style="left:394px;top:348px;width:12px;height:12px;border-radius:50%;background:#5ccfff"></div>
<div class="code" style="left:434px;top:367px;color:#000080">  return 0;</div>
<div class="code" style="left:404px;top:367px;width:27px;text-align:right;color:#808080">11</div>
<div class="a" style="left:394px;top:368px;width:12px;height:12px;border-radius:50%;background:#5ccfff"></div>
<div class="code" style="left:434px;top:387px;color:#000080">}</div>
<div class="code" style="left:404px;top:387px;width:27px;text-align:right;color:#808080">12</div>
<div class="a" style="left:394px;top:388px;width:12px;height:12px;border-radius:50%;background:#5ccfff"></div>
<div class="a" style="left:434px;top:808px;width:1485px;height:22px;background:#f0f0f0"></div>
<div class="sm" style="left:437px;top:813px;font-size:14.6px;letter-spacing:0">00003318</div>
<div class="sm" style="left:514px;top:813px;font-size:14.6px;letter-spacing:0">main:6 (401318)</div>
<div class="sep" style="left:509px;top:810px;height:19px"></div>
<div class="sep" style="left:650px;top:810px;height:19px"></div>
<div class="sep" style="left:665px;top:810px;height:19px"></div>


<!-- ===== output ===== -->
<div class="a" style="left:0;top:835px;width:1920px;height:26px;border:1px solid #a0a0a0;background:#f0f0f0"></div>
<div class="a" style="left:0;top:863px;width:1920px;height:117px;border:1px solid #828790;background:#fff"></div>
<svg style="left:4px;top:840px" width="15" height="17" viewBox="0 0 15 17">
<rect x="0.5" y="0.5" width="13" height="15" fill="#f4f8ff" stroke="#607090"/><rect x="1" y="1" width="12" height="2.2" fill="#2a8ae8"/>
<path d="M3 6.5H11M3 8.5H11M3 10.5H11M3 12.5H11" stroke="#405060" stroke-width="0.8"/>
</svg>
<div class="sm" style="left:25px;top:842px">Output window</div>
<svg style="left:1848px;top:845px" width="9" height="9"><rect x="0.5" y="0.5" width="8" height="8" fill="none" stroke="#000"/><rect x="0" y="0" width="9" height="2" fill="#000"/></svg>
<svg style="left:1876px;top:845px" width="9" height="9"><rect x="0.5" y="3.5" width="5" height="5" fill="none" stroke="#000"/><rect x="0" y="3" width="6" height="2" fill="#000"/><path d="M2.5 3V0.5H8.5V5.5H6" fill="none" stroke="#000"/><rect x="2" y="0" width="7" height="2" fill="#000"/></svg>
<svg style="left:1903px;top:846px" width="8" height="8"><path d="M0.5 0.5L7.5 7.5M7.5 0.5L0.5 7.5" stroke="#000" stroke-width="1.6"/></svg>
<div class="a" style="left:1px;top:864px;width:1898px;height:115px;overflow:hidden">
<div class="code" style="left:6px;top:-3px;color:#000;line-height:20px">You may start to explore the input file right now.
Propagating type information...
Function argument information has been propagated
The initial autoanalysis has been finished.
401210: using guessed type __int64 __fastcall vul(_QWORD, _QWORD);
401210: using guessed type __int64 __fastcall vul(_QWORD, _QWORD);</div>
</div>
<div class="a" style="left:1899px;top:864px;width:20px;height:115px;background:#f0f0f0"></div>
<div class="a" style="left:1900px;top:936px;width:18px;height:22px;background:#c8c8c8"></div>
<svg style="left:1903px;top:870px" width="13" height="9"><path d="M1.5 7.5L6.5 2.5L11.5 7.5" fill="none" stroke="#606060" stroke-width="2"/></svg>
<svg style="left:1903px;top:963px" width="13" height="9"><path d="M1.5 1.5L6.5 6.5L11.5 1.5" fill="none" stroke="#606060" stroke-width="2"/></svg>

<div class="a" style="left:68px;top:982px;width:1851px;height:25px;border:1px solid #a0a0a0;background:#fff"></div>
<div class="a" style="left:17px;top:982px;width:47px;height:23px;background:#e6e6e6;border:1px solid #c8c8c8"></div>
<div class="sm" style="left:21px;top:988px">IDC</div>
<div class="sm" style="left:2px;top:1013px;font-size:14.6px;letter-spacing:0">AU:</div><div class="sm" style="left:46px;top:1013px;font-size:14.6px;letter-spacing:0">idle</div>
<div class="sep" style="left:102px;top:1010px;height:19px;background:#d0d0d0"></div>
<div class="sm" style="left:107px;top:1013px;font-size:14.6px;letter-spacing:0">Down</div>
<div class="sep" style="left:178px;top:1010px;height:19px;background:#d0d0d0"></div>
<div class="sm" style="left:183px;top:1013px;font-size:14.6px;letter-spacing:0">Disk: 33GB</div>
<div class="sep" style="left:274px;top:1010px;height:19px;background:#d0d0d0"></div>
<div class="a" style="left:0;top:977px;width:17px;height:53px;background:#303030;border-radius:0 4px 4px 0;opacity:0.9"></div>
<div class="a" style="left:3px;top:983px;width:10px;height:44px;background:repeating-linear-gradient(#707070 0 1px,transparent 1px 3px)"></div>
<div class="a" style="left:3px;top:997px;width:10px;height:5px;background:repeating-linear-gradient(#f0a020 0 1px,transparent 1px 3px)"></div>
<div class="a" style="left:3px;top:1022px;width:10px;height:2px;background:#40c040"></div>

</body></html>
